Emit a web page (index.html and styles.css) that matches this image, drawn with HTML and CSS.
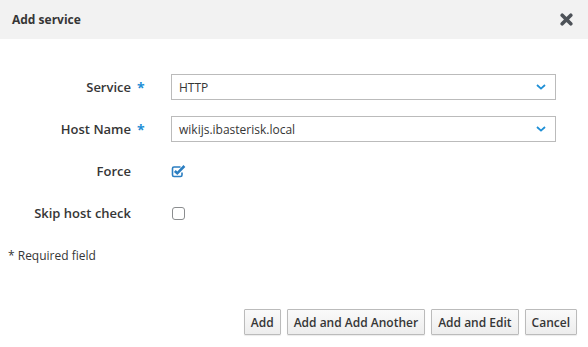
FILE: index.html
```html
<!DOCTYPE html>
<html lang="en">
<head>
    <meta charset="UTF-8">
    <title>Add service</title>
    <link rel="stylesheet" href="styles.css">
</head>
<body>
    <div class="dialog">
        <div class="dialog-header">
            <h4 class="dialog-title">Add service</h4>
            <button class="close-button" aria-label="Close">
                <svg width="13" height="13" viewBox="0 0 13 13">
                    <path d="M2.2 2.2 L10.8 10.8 M10.8 2.2 L2.2 10.8" stroke="#4d5258" stroke-width="3.6" stroke-linecap="round"/>
                </svg>
            </button>
        </div>

        <form class="dialog-body">
            <div class="form-row">
                <label class="field-label">Service</label>
                <span class="required-mark">*</span>
                <div class="select-box">
                    <span>HTTP</span>
                    <svg class="chevron" width="10" height="6" viewBox="0 0 10 6">
                        <path d="M1 1 L5 4.6 L9 1" fill="none" stroke="#1e8fd6" stroke-width="1.8"/>
                    </svg>
                </div>
            </div>
            <div class="form-row">
                <label class="field-label">Host Name</label>
                <span class="required-mark">*</span>
                <div class="select-box">
                    <span>wikijs.ibasterisk.local</span>
                    <svg class="chevron" width="10" height="6" viewBox="0 0 10 6">
                        <path d="M1 1 L5 4.6 L9 1" fill="none" stroke="#1e8fd6" stroke-width="1.8"/>
                    </svg>
                </div>
            </div>
            <div class="form-row">
                <label class="field-label">Force</label>
                <span class="required-mark"></span>
                <span class="checkbox">
                    <svg width="15" height="14" viewBox="0 0 15 14">
                        <path d="M9.5 3 H3 Q1.5 3 1.5 4.5 V11 Q1.5 12.5 3 12.5 H9.5 Q11 12.5 11 11 V8.5" fill="none" stroke="#2b7ec1" stroke-width="1.6"/>
                        <path d="M3.8 7 L6.3 9.3 L13.4 2" fill="none" stroke="#2b7ec1" stroke-width="2.6"/>
                    </svg>
                </span>
            </div>
            <div class="form-row">
                <label class="field-label">Skip host check</label>
                <span class="required-mark"></span>
                <span class="checkbox">
                    <span class="checkbox-empty"></span>
                </span>
            </div>

            <p class="required-note">* Required field</p>
        </form>

        <div class="dialog-footer">
            <button class="btn">Add</button>
            <button class="btn">Add and Add Another</button>
            <button class="btn">Add and Edit</button>
            <button class="btn">Cancel</button>
        </div>
    </div>
</body>
</html>
```

FILE: styles.css
```css
body {
    margin: 0;
    font-family: "Open Sans", sans-serif;
    font-size: 12px;
    color: #363636;
    background: #fff;
}
.dialog {
    width: 588px;
    height: 347px;
    display: flex;
    flex-direction: column;
}
.dialog-header {
    height: 39px;
    background: #f2f2f2;
    display: flex;
    align-items: center;
    justify-content: space-between;
    padding: 0 15px 0 12px;
}
.dialog-title {
    margin: 0;
    font-size: 12px;
    font-weight: 700;
    color: #363636;
}
.close-button {
    border: none;
    background: none;
    padding: 0;
    display: flex;
    cursor: pointer;
}
.dialog-body {
    flex: 1;
    padding: 35px 32px 0 0;
}
.form-row {
    display: grid;
    grid-template-columns: 131px 40px 1fr;
    align-items: center;
    height: 26px;
    margin-bottom: 16px;
}
.field-label {
    text-align: right;
    font-size: 13px;
    font-weight: 600;
}
.required-mark {
    padding-left: 6px;
    color: #1e8fd6;
    font-weight: 700;
    font-size: 14px;
}
.select-box {
    height: 26px;
    box-sizing: border-box;
    border: 1px solid #bbb;
    display: flex;
    align-items: center;
    justify-content: space-between;
    padding: 0 9px 0 7px;
}
.chevron {
    display: block;
}
.checkbox {
    display: flex;
    align-items: center;
}
.checkbox svg {
    display: block;
}
.checkbox-empty {
    display: block;
    width: 11px;
    height: 11px;
    margin-left: 1px;
    border: 1px solid #8b8d8f;
    border-radius: 3px;
}
.required-note {
    margin: 0;
    padding: 5px 0 0 8px;
}
.dialog-footer {
    display: flex;
    justify-content: flex-end;
    gap: 6px;
    padding: 0 11px 12px 0;
}
.btn {
    height: 26px;
    padding: 0 6px;
    font-family: "Open Sans", sans-serif;
    font-size: 12px;
    font-weight: 600;
    color: #363636;
    background: linear-gradient(#fafafa, #ededed);
    border: 1px solid #bbb;
    border-radius: 1px;
    box-shadow: 0 1px 1px rgba(3, 3, 3, 0.08);
}
```
